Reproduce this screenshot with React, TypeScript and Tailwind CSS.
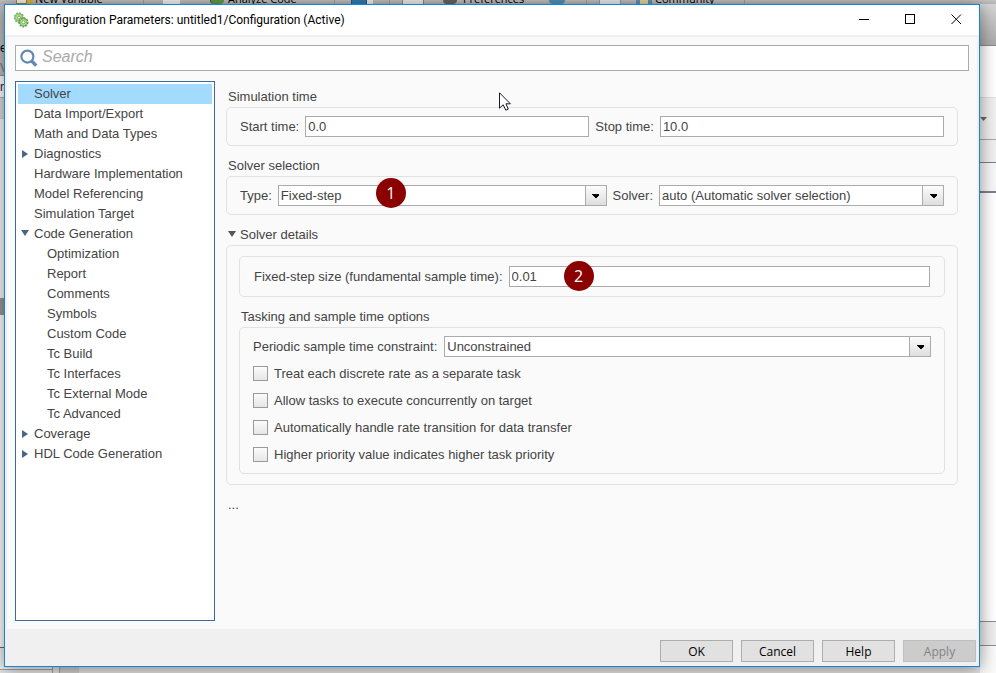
import { useState } from "react";
import type { ReactNode } from "react";
import clsx from "clsx";

type TreeItem = {
  label: string;
  child?: boolean;
  arrow?: "right" | "down";
};

const TREE: TreeItem[] = [
  { label: "Solver" },
  { label: "Data Import/Export" },
  { label: "Math and Data Types" },
  { label: "Diagnostics", arrow: "right" },
  { label: "Hardware Implementation" },
  { label: "Model Referencing" },
  { label: "Simulation Target" },
  { label: "Code Generation", arrow: "down" },
  { label: "Optimization", child: true },
  { label: "Report", child: true },
  { label: "Comments", child: true },
  { label: "Symbols", child: true },
  { label: "Custom Code", child: true },
  { label: "Tc Build", child: true },
  { label: "Tc Interfaces", child: true },
  { label: "Tc External Mode", child: true },
  { label: "Tc Advanced", child: true },
  { label: "Coverage", arrow: "right" },
  { label: "HDL Code Generation", arrow: "right" },
];

const TASK_OPTIONS = [
  "Treat each discrete rate as a separate task",
  "Allow tasks to execute concurrently on target",
  "Automatically handle rate transition for data transfer",
  "Higher priority value indicates higher task priority",
];

function Triangle({ dir, className }: { dir: "right" | "down"; className?: string }) {
  return (
    <svg viewBox="0 0 8 8" className={clsx("w-2 h-2 shrink-0", className)} aria-hidden="true">
      <path d={dir === "right" ? "M1 0L7 4L1 8Z" : "M0 0H8L4 6Z"} fill="currentColor" />
    </svg>
  );
}

function GearsIcon() {
  return (
    <svg viewBox="0 0 16 16" className="w-4 h-4 shrink-0" aria-hidden="true">
      <circle cx="6" cy="5.6" r="4.4" fill="#b9dba0" stroke="#7db765" strokeWidth="1.8" strokeDasharray="2 0.9" />
      <circle cx="6" cy="5.6" r="3.6" fill="#b4da9a" stroke="#7ab55e" strokeWidth="0.7" />
      <circle cx="6" cy="5.6" r="1.5" fill="#f4faef" stroke="#5b9c3f" strokeWidth="0.7" />
      <circle cx="10.4" cy="10.3" r="4.2" fill="#b9dba0" stroke="#5c9c45" strokeWidth="1.8" strokeDasharray="1.9 0.9" />
      <circle cx="10.4" cy="10.3" r="3.4" fill="#c4e3ae" stroke="#6aab4c" strokeWidth="0.7" />
      <circle cx="10.4" cy="10.3" r="1.6" fill="#f4faef" stroke="#5b9c3f" strokeWidth="0.8" />
    </svg>
  );
}

function SearchIcon() {
  return (
    <svg viewBox="0 0 18 18" className="w-[18px] h-[18px] shrink-0" fill="none" stroke="#6289b5" aria-hidden="true">
      <circle cx="7.4" cy="7.6" r="6" strokeWidth="2.2" />
      <path d="M11.6 12L16.2 16.6" strokeWidth="3.4" />
    </svg>
  );
}

function Pointer() {
  return (
    <svg viewBox="0 0 12 19" className="absolute left-[494px] top-[87px] w-3 h-[19px]" aria-hidden="true">
      <path
        d="M0.5 0.8V16.2L4.2 12.8L6.8 18.2L9.3 17.1L6.9 11.8H11.4Z"
        fill="#fff"
        stroke="#1a1a24"
        strokeWidth="1"
      />
    </svg>
  );
}

function Badge({ children, className }: { children: ReactNode; className: string }) {
  return (
    <span
      className={clsx(
        "absolute w-[30px] h-[30px] rounded-full bg-[#8b0000] text-white text-base leading-[30px] text-center font-['Open_Sans','Noto_Sans',sans-serif]",
        className
      )}
    >
      {children}
    </span>
  );
}

function Group({ children, className }: { children: ReactNode; className?: string }) {
  return <div className={clsx("border border-[#e1e1e1] rounded-[5px]", className)}>{children}</div>;
}

function TextBox({ id, value, className }: { id: string; value: string; className?: string }) {
  return (
    <input
      id={id}
      type="text"
      defaultValue={value}
      className={clsx("min-w-0 h-[21px] border border-[#ababab] bg-white px-0.5 outline-none", className)}
    />
  );
}

function DropDown({
  id,
  value,
  className,
  children,
}: {
  id: string;
  value: string;
  className?: string;
  children?: ReactNode;
}) {
  return (
    <div className={clsx("relative min-w-0 h-[21px] flex", className)}>
      <select id={id} className="w-full appearance-none border border-[#ababab] bg-white pl-0.5 pr-6 outline-none">
        <option>{value}</option>
      </select>
      <span className="absolute right-0 inset-y-0 w-[22px] border border-[#ababab] bg-linear-to-b from-[#fcfcfc] to-[#dedede] flex items-center justify-center pointer-events-none text-black">
        <svg viewBox="0 0 7 4" className="w-[7px] h-1" shapeRendering="crispEdges" aria-hidden="true">
          <path d="M0 0H7V1L4 4H3L0 1Z" fill="currentColor" />
        </svg>
      </span>
      {children}
    </div>
  );
}

function ToolStrip() {
  return (
    <div className="h-1 flex items-end overflow-hidden bg-linear-to-b from-[#c4c4c4] to-[#b4b4b4] text-[11px] leading-[10px] text-black whitespace-nowrap font-['Open_Sans','Noto_Sans',sans-serif]">
      <div className="w-36 h-full pl-4 flex items-end border-r border-[#a0a0a0] shrink-0">
        <span className="w-[11px] h-1 bg-[#f5f3dc] border-x border-b border-[#8c8465]" />
        <span className="w-1.5 h-1 mr-0.5 bg-[#d9b545]" />
        New Variable
      </div>
      <div className="w-[191px] h-full pl-[19px] flex items-end border-r border-[#a0a0a0] shrink-0">
        <span className="w-[17px] h-1 mr-[30px] bg-[#f2f4f6]" />
        <span className="w-[14px] h-1 mr-1 rounded-b-full bg-[#5f9b4a] border-l border-[#4c4c4c]" />
        Analyze Code
      </div>
      <div className="w-[55px] h-full pl-4 flex items-end border-r border-[#a0a0a0] shrink-0">
        <span className="w-4 h-1 bg-[#2f7eb2] border-x border-[#37546b]" />
        <span className="w-1.5 h-1 bg-[#eeeeee]" />
      </div>
      <div className="w-[197px] h-full pl-3 flex items-end border-r border-[#a0a0a0] shrink-0">
        <span className="w-[22px] h-1 mr-[19px] bg-[#ededed] border-x border-[#8a8a8a]" />
        <span className="w-[14px] h-1 mr-1.5 rounded-b-md bg-[#656565]" />
        <span className="w-[86px]">Preferences</span>
        <span className="w-4 h-1 rounded-b-md bg-[#4e94b8]" />
      </div>
      <div className="w-[158px] h-full pl-3 flex items-end border-r border-[#a0a0a0] shrink-0">
        <span className="w-[22px] h-1 mr-[15px] bg-[#e8edf1] border-x border-[#8ba0b4]" />
        <span className="w-4 h-1 mr-[3px] bg-[#e4d596] border-x-4 border-[#5a93c2]" />
        Community
      </div>
    </div>
  );
}

export default function App() {
  const [selected, setSelected] = useState("Solver");

  return (
    <div className="min-h-screen flex flex-col overflow-hidden bg-white text-[13px] text-[#444444] font-['Liberation_Sans',Arial,sans-serif]">
      <ToolStrip />

      <div className="flex-1 flex">
        {/* desktop window showing at the left edge */}
        <div className="w-1 shrink-0 flex flex-col overflow-hidden bg-[#f2f2f2] text-xs text-black">
          <div className="h-[72px] bg-[#bdbdbd] border-b border-[#8f8f8f] pt-9 leading-4">
            e<div className="pt-1 text-[#777777]">V</div>
          </div>
          <div className="h-[22px] bg-white border-b border-[#b5b5b5] leading-[22px] text-[#4a1030]">r</div>
          <div className="h-5 bg-[#dcdcdc]" />
          <div className="h-[180px] border-t border-[#cccccc] bg-[#f8f8f8]" />
          <div className="h-[17px] bg-[#999999]" />
          <div className="h-[333px] bg-white border-b border-[#666666]" />
        </div>

        <main className="relative z-10 flex-1 min-w-0 flex flex-col border border-[#1883d7] bg-[#f0f0f0] shadow-[0_2px_16px_rgba(0,0,0,0.45)]">
          <header className="h-[30px] bg-white pl-2 flex items-center text-black">
            <GearsIcon />
            <h1 className="pl-[5px] flex-1 text-xs font-['Roboto','Noto_Sans',sans-serif]">
              Configuration Parameters: untitled1/Configuration (Active)
            </h1>
            <button type="button" aria-label="Minimize" className="w-[46px] h-full pb-0.5 flex items-center justify-center">
              <svg viewBox="0 0 11 11" className="w-[11px] h-[11px]" shapeRendering="crispEdges">
                <path d="M0 5.5H10" stroke="currentColor" />
              </svg>
            </button>
            <button type="button" aria-label="Maximize" className="w-[46px] h-full pb-0.5 flex items-center justify-center">
              <svg viewBox="0 0 11 11" className="w-[11px] h-[11px]" shapeRendering="crispEdges">
                <path d="M0.5 0.5H9.5V9.5H0.5Z" fill="none" stroke="currentColor" />
              </svg>
            </button>
            <button type="button" aria-label="Close" className="w-[46px] h-full pb-0.5 flex items-center justify-center">
              <svg viewBox="0 0 11 11" className="w-[11px] h-[11px]">
                <path d="M0.5 0.5L10 10M10 0.5L0.5 10" stroke="currentColor" />
              </svg>
            </button>
          </header>

          <div className="flex-1 mx-0.5 mt-0.5 p-2 bg-[#fafafa] flex flex-col gap-2.5">
            <label className="h-[26px] border border-[#ababab] bg-white pl-1 flex items-center">
              <SearchIcon />
              <input
                type="text"
                placeholder="Search"
                aria-label="Search"
                className="flex-1 h-full pl-1 pb-0.5 text-base italic outline-none placeholder:text-[#ababab]"
              />
            </label>

            <div className="flex-1 flex gap-[11px]">
              <nav className="w-[200px] shrink-0 border border-[#3c6a9c] bg-white p-0.5">
                <ul>
                  {TREE.map((item) => (
                    <li key={item.label}>
                      <button
                        type="button"
                        onClick={() => setSelected(item.label)}
                        className={clsx(
                          "w-full h-5 flex items-center text-left leading-5",
                          item.child ? "pl-[29px]" : item.arrow ? "pl-[3px] gap-[5px]" : "pl-4",
                          selected === item.label && "bg-[#a2dbff]"
                        )}
                      >
                        {item.arrow && <Triangle dir={item.arrow} className="text-[#4a6680]" />}
                        {item.label}
                      </button>
                    </li>
                  ))}
                </ul>
              </nav>

              <div className="flex-1 min-w-0 pt-1.5 pr-[11px] flex flex-col gap-2.5">
                <section>
                  <h2 className="pl-0.5 leading-5">Simulation time</h2>
                  <Group className="px-[13px] py-2 flex items-center gap-1.5">
                    <label htmlFor="start">Start time:</label>
                    <TextBox id="start" value="0.0" className="flex-1" />
                    <label htmlFor="stop">Stop time:</label>
                    <TextBox id="stop" value="10.0" className="flex-1" />
                  </Group>
                </section>

                <section>
                  <h2 className="pl-0.5 leading-5">Solver selection</h2>
                  <Group className="px-[13px] py-2 flex items-center gap-1.5">
                    <label htmlFor="type">Type:</label>
                    <DropDown id="type" value="Fixed-step" className="flex-[15]">
                      <Badge className="left-[98px] -top-[7px]">1</Badge>
                    </DropDown>
                    <label htmlFor="solver">Solver:</label>
                    <DropDown id="solver" value="auto (Automatic solver selection)" className="flex-[13]" />
                  </Group>
                </section>

                <section>
                  <h2>
                    <button type="button" aria-expanded="true" className="pl-0.5 flex items-center gap-1 leading-5">
                      <Triangle dir="down" className="text-[#555555]" />
                      Solver details
                    </button>
                  </h2>
                  <Group className="px-3 py-2.5 flex flex-col gap-2.5">
                    <Group className="px-3.5 py-[9px] flex items-center gap-1.5">
                      <label htmlFor="step">Fixed-step size (fundamental sample time):</label>
                      <div className="relative flex-1 flex">
                        <TextBox id="step" value="0.01" className="w-full" />
                        <Badge className="left-[55px] -top-[5px]">2</Badge>
                      </div>
                    </Group>

                    <div>
                      <h3 className="pl-0.5 leading-5">Tasking and sample time options</h3>
                      <Group className="px-[13px] pt-2 pb-[5px]">
                        <div className="flex items-center gap-[7px] mb-[3px]">
                          <label htmlFor="constraint">Periodic sample time constraint:</label>
                          <DropDown id="constraint" value="Unconstrained" className="flex-1" />
                        </div>
                        {TASK_OPTIONS.map((option) => (
                          <label key={option} className="h-[27px] flex items-center gap-1.5">
                            <input
                              type="checkbox"
                              className="appearance-none w-[15px] h-[15px] border border-[#9a9a9a] bg-linear-to-b from-[#fbfbfb] to-[#e6e6e6] checked:bg-[#6289b5]"
                            />
                            {option}
                          </label>
                        ))}
                      </Group>
                    </div>
                  </Group>
                </section>

                <p className="pl-0.5 leading-5">...</p>
              </div>
            </div>
          </div>

          <footer className="pt-[11px] pb-1 pr-[3px] flex justify-end gap-2 text-xs text-black font-['Open_Sans','Noto_Sans',sans-serif]">
            {["OK", "Cancel", "Help", "Apply"].map((label) => (
              <button
                key={label}
                type="button"
                disabled={label === "Apply"}
                className="w-[73px] h-[22px] pt-px border border-[#adadad] bg-[#e1e1e1] disabled:bg-[#cccccc] disabled:border-[#bfbfbf] disabled:text-[#838383]"
              >
                {label}
              </button>
            ))}
          </footer>

          <Pointer />
        </main>

        {/* desktop window showing at the right edge */}
        <div className="w-4 shrink-0 flex flex-col bg-white">
          <div className="h-[42px] bg-linear-to-b from-[#d6d6d6] to-[#aaaaaa] border-b border-[#8a8a8a]" />
          <div className="h-[52px] border-b border-[#e0e0e0]" />
          <div className="h-[42px] bg-[#f0f0f0] border-b border-[#a8a8a8] flex items-center text-[#666666]">
            <svg viewBox="0 0 7 4" className="w-[7px] h-1" aria-hidden="true">
              <path d="M0 0H7L3.5 4Z" fill="currentColor" />
            </svg>
          </div>
          <div className="h-[23px] bg-[#f0f0f0] border-b border-[#7c808f]" />
          <div className="h-[30px] bg-[#f8f8f8] border-b-2 border-[#7c808f]" />
          <div className="flex-1" />
          <div className="h-[25px] bg-[#eeeeee] border-y border-[#8d8d94]" />
          <div className="h-[21px] bg-[#fafafa]" />
        </div>
      </div>

      <div className="h-1.5 flex bg-[#e6e6e6]">
        <div className="w-[53px] border-r border-[#a6a6a6]">
          <div className="h-[3px] bg-[#f6f6f6] border-b border-[#a6a6a6]" />
        </div>
        <div className="w-[7px] border-r border-[#a6a6a6]" />
        <div className="w-[19px] bg-[#d2d2d2]" />
        <div className="flex-1" />
        <div className="w-4 bg-[#fafafa]" />
      </div>
    </div>
  );
}
